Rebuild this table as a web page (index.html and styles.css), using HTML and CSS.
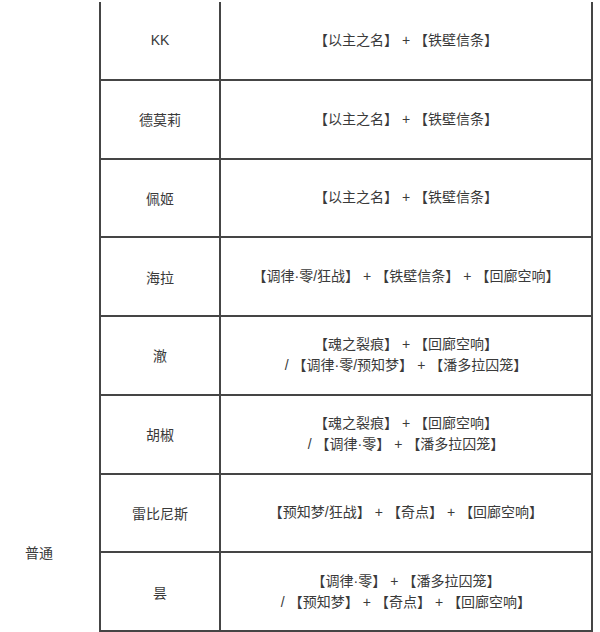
FILE: index.html
```html
<!DOCTYPE html>
<html lang="zh-CN">
<head>
<meta charset="utf-8">
<title>阵容搭配</title>
<link rel="stylesheet" href="styles.css">
</head>
<body>
<div class="sheet">
  <div class="tier"><span>普通</span></div>
  <div class="table">
    <div class="row"><div class="name">KK</div><div class="combo"><p>【以主之名】<span class="plus">+</span>【铁壁信条】</p></div></div>
    <div class="row"><div class="name">德莫莉</div><div class="combo"><p>【以主之名】<span class="plus">+</span>【铁壁信条】</p></div></div>
    <div class="row"><div class="name">佩姬</div><div class="combo"><p>【以主之名】<span class="plus">+</span>【铁壁信条】</p></div></div>
    <div class="row"><div class="name">海拉</div><div class="combo"><p>【调律·零/狂战】<span class="plus">+</span>【铁壁信条】<span class="plus">+</span>【回廊空响】</p></div></div>
    <div class="row"><div class="name">澈</div><div class="combo"><p>【魂之裂痕】<span class="plus">+</span>【回廊空响】</p><p><span class="slash">/</span>【调律·零/预知梦】<span class="plus">+</span>【潘多拉囚笼】</p></div></div>
    <div class="row"><div class="name">胡椒</div><div class="combo"><p>【魂之裂痕】<span class="plus">+</span>【回廊空响】</p><p><span class="slash">/</span>【调律·零】<span class="plus">+</span>【潘多拉囚笼】</p></div></div>
    <div class="row"><div class="name">雷比尼斯</div><div class="combo"><p>【预知梦/狂战】<span class="plus">+</span>【奇点】<span class="plus">+</span>【回廊空响】</p></div></div>
    <div class="row"><div class="name">昙</div><div class="combo"><p>【调律·零】<span class="plus">+</span>【潘多拉囚笼】</p><p><span class="slash">/</span>【预知梦】<span class="plus">+</span>【奇点】<span class="plus">+</span>【回廊空响】</p></div></div>
  </div>
</div>
</body>
</html>
```

FILE: styles.css
```css
html, body {
  margin: 0;
  padding: 0;
  background: #ffffff;
}
body {
  font-family: "Liberation Sans", "Noto Sans CJK SC", sans-serif;
  font-size: 14px;
  color: #3a3a3a;
  width: 600px;
  height: 632px;
  overflow: hidden;
}
.sheet {
  display: grid;
  grid-template-columns: 99px 494px;
  padding-top: 2px;
  height: 630px;
}
.tier {
  display: flex;
  align-items: flex-end;
  padding: 0 0 69px 25px;
  line-height: 20px;
}
.table {
  display: grid;
  grid-template-rows: repeat(8, 1fr);
  border-left: 2px solid #454545;
  border-right: 2px solid #454545;
  height: 630px;
  box-sizing: border-box;
}
.row {
  display: grid;
  grid-template-columns: 120px 1fr;
  border-bottom: 2px solid #454545;
  min-height: 0;
}
.name {
  display: flex;
  align-items: center;
  justify-content: center;
  border-right: 2px solid #454545;
}
.combo {
  display: flex;
  flex-direction: column;
  align-items: center;
  justify-content: center;
  line-height: 21px;
}
.combo p {
  margin: 0;
  white-space: nowrap;
}
.plus {
  margin: 0 4px;
}
.slash {
  margin-right: 4px;
}
```
